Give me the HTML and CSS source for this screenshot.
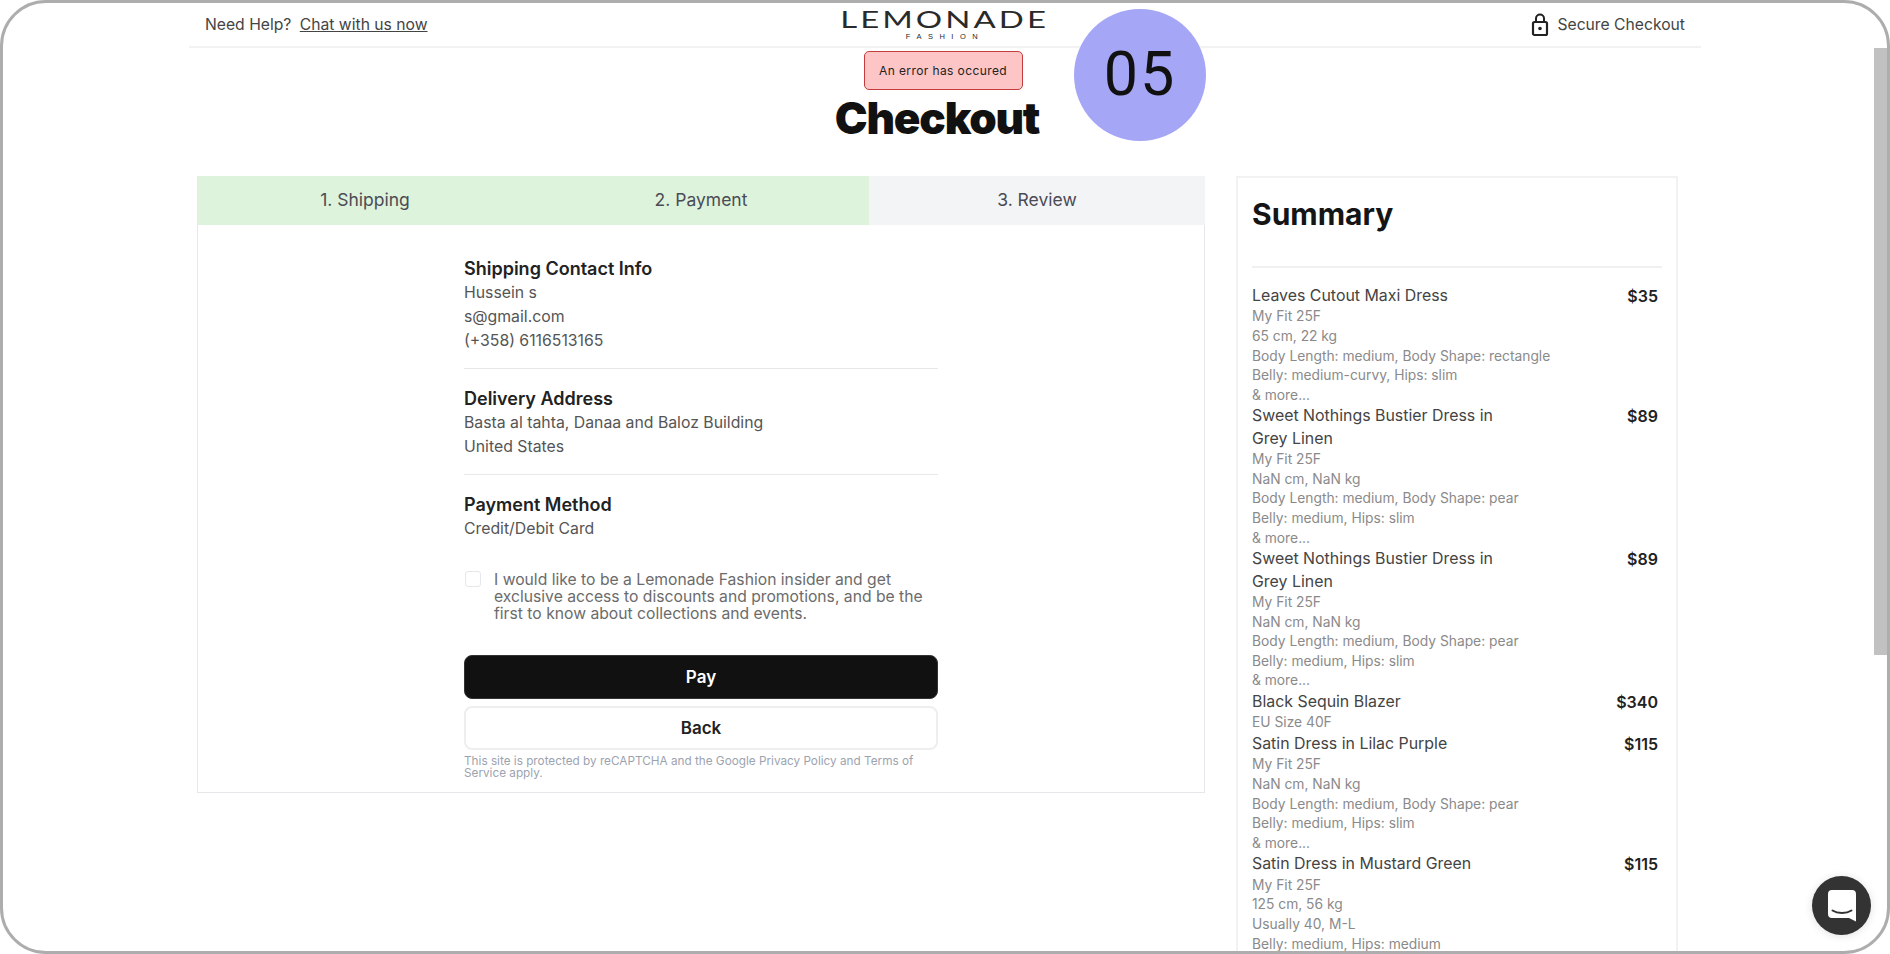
FILE: index.html
```html
<!DOCTYPE html>
<html lang="en">
<head>
<meta charset="utf-8">
<title>Checkout</title>
<link rel="stylesheet" href="styles.css">
</head>
<body>
<div class="frame">
  <div class="page">
    <header class="topbar">
      <div class="help"><span>Need Help?</span> <a class="chat-link" href="#">Chat with us now</a></div>
      <div class="logo">
        <div class="logo-main">LEMONADE</div>
        <div class="logo-sub">FASHION</div>
      </div>
      <div class="secure">
        <svg class="lock" viewBox="0 0 18 26" width="18" height="26" aria-hidden="true">
          <path d="M5 10V6.500a4 4 0 0 1 8 0V10" fill="none" stroke="#222" stroke-width="2"/>
          <rect x="2" y="10" width="14" height="13" rx="1.500" fill="none" stroke="#222" stroke-width="2.200"/>
          <circle cx="9" cy="16.500" r="1.800" fill="#222"/>
        </svg>
        <span>Secure Checkout</span>
      </div>
    </header>
    <div class="heading">
      <div class="error">An error has occured</div>
      <h1 class="title">Checkout</h1>
    </div>
    <div class="columns">
      <section class="card">
        <div class="tabs">
          <div class="tab tab-done">1. Shipping</div>
          <div class="tab tab-done">2. Payment</div>
          <div class="tab tab-todo">3. Review</div>
        </div>
        <div class="review">
          <div class="block">
            <h3 class="block-title">Shipping Contact Info</h3>
            <p class="line">Hussein s</p>
            <p class="line">s@gmail.com</p>
            <p class="line">(+358) 6116513165</p>
          </div>
          <div class="block">
            <h3 class="block-title">Delivery Address</h3>
            <p class="line">Basta al tahta, Danaa and Baloz Building</p>
            <p class="line">United States</p>
          </div>
          <div class="block block-last">
            <h3 class="block-title">Payment Method</h3>
            <p class="line">Credit/Debit Card</p>
          </div>
          <label class="optin">
            <span class="box"></span>
            <span class="optin-text">I would like to be a Lemonade Fashion insider and get exclusive access to discounts and promotions, and be the first to know about collections and events.</span>
          </label>
          <button class="btn btn-pay">Pay</button>
          <button class="btn btn-back">Back</button>
          <p class="legal">This site is protected by reCAPTCHA and the Google Privacy Policy and Terms of Service apply.</p>
        </div>
      </section>
      <aside class="summary">
        <h2 class="summary-title">Summary</h2>
        <div class="items">
          <div class="item">
            <div class="item-head"><span class="item-name">Leaves Cutout Maxi Dress</span><span class="price">$35</span></div>
            <div class="sub">My Fit 25F</div><div class="sub">65 cm, 22 kg</div><div class="sub">Body Length: medium, Body Shape: rectangle</div><div class="sub">Belly: medium-curvy, Hips: slim</div><div class="sub">&amp; more...</div>
          </div>
          <div class="item">
            <div class="item-head"><span class="item-name">Sweet Nothings Bustier Dress in Grey Linen</span><span class="price">$89</span></div>
            <div class="sub">My Fit 25F</div><div class="sub">NaN cm, NaN kg</div><div class="sub">Body Length: medium, Body Shape: pear</div><div class="sub">Belly: medium, Hips: slim</div><div class="sub">&amp; more...</div>
          </div>
          <div class="item">
            <div class="item-head"><span class="item-name">Sweet Nothings Bustier Dress in Grey Linen</span><span class="price">$89</span></div>
            <div class="sub">My Fit 25F</div><div class="sub">NaN cm, NaN kg</div><div class="sub">Body Length: medium, Body Shape: pear</div><div class="sub">Belly: medium, Hips: slim</div><div class="sub">&amp; more...</div>
          </div>
          <div class="item">
            <div class="item-head"><span class="item-name">Black Sequin Blazer</span><span class="price">$340</span></div>
            <div class="sub">EU Size 40F</div>
          </div>
          <div class="item">
            <div class="item-head"><span class="item-name">Satin Dress in Lilac Purple</span><span class="price">$115</span></div>
            <div class="sub">My Fit 25F</div><div class="sub">NaN cm, NaN kg</div><div class="sub">Body Length: medium, Body Shape: pear</div><div class="sub">Belly: medium, Hips: slim</div><div class="sub">&amp; more...</div>
          </div>
          <div class="item">
            <div class="item-head"><span class="item-name">Satin Dress in Mustard Green</span><span class="price">$115</span></div>
            <div class="sub">My Fit 25F</div><div class="sub">125 cm, 56 kg</div><div class="sub">Usually 40, M-L</div><div class="sub">Belly: medium, Hips: medium</div><div class="sub">&amp; more...</div>
          </div>
        </div>
      </aside>
    </div>
  </div>
  <div class="step-badge">05</div>
  <div class="scroll-thumb"></div>
  <div class="chat-bubble">
    <svg viewBox="0 0 28 32" width="28" height="32" aria-hidden="true">
      <path d="M4 0h20a4 4 0 0 1 4 4v27.500l-7-3.500H4a4 4 0 0 1-4-4V4a4 4 0 0 1 4-4z" fill="#fff"/>
      <path d="M4.500 20.500c5 3.200 14 3.200 19 0" fill="none" stroke="#333" stroke-width="2" stroke-linecap="round"/>
    </svg>
  </div>
</div>
</body>
</html>
```
FILE: styles.css
```css
* { box-sizing: border-box; }
html, body { margin: 0; padding: 0; background: #fff; overflow: hidden; }
body { font-family: Inter, "Liberation Sans", sans-serif; color: #111; }
p, h1, h2, h3 { margin: 0; }

.frame {
  position: relative;
  width: 1890px;
  height: 954px;
  border: 3px solid #adadad;
  border-radius: 46px;
  overflow: hidden;
  background: #fff;
}
.page { width: 1512px; margin-left: 186px; }

.topbar {
  display: grid;
  grid-template-columns: 1fr auto 1fr;
  align-items: center;
  height: 45px;
  padding: 0 16px;
  border-bottom: 2px solid #f2f2f2;
  font-size: 15.7px;
  color: #444;
}
.chat-link { color: #444; margin-left: 4px; }
.logo { text-align: center; color: #2a2a2a; height: 43px; }
.logo-main { font-family: Lato, sans-serif; font-size: 23.5px; line-height: 22px; letter-spacing: 2.2px; transform: scaleX(1.4); margin-top: 5px; }
.logo-sub { font-family: "Liberation Sans", sans-serif; font-size: 7.5px; line-height: 10px; letter-spacing: 6.5px; margin-top: 2px; }
.secure { display: flex; align-items: center; justify-content: flex-end; gap: 8px; }

.heading { display: flex; flex-direction: column; align-items: center; }
.error {
  width: 159px;
  height: 39px;
  margin: 3px 0 0 -4px;
  display: flex;
  align-items: center;
  justify-content: center;
  background: #fdc5c5;
  border: 1px solid #c43c3c;
  border-radius: 5px;
  font-size: 12px;
  letter-spacing: 0.4px;
  color: #222;
}
.title {
  margin: 3px 16px 0 0;
  font-size: 44px;
  line-height: 50px;
  font-weight: 900;
  letter-spacing: -1.2px;
  color: #111;
}

.columns { display: flex; gap: 31px; margin-top: 33px; padding-left: 8px; align-items: flex-start; }
.card { width: 1008px; height: 617px; border: 1px solid #e5e7eb; flex: none; }
.tabs { display: grid; grid-template-columns: repeat(3, 1fr); height: 49px; margin: -1px -1px 0; }
.tab { display: flex; align-items: center; justify-content: center; padding-bottom: 2px; font-size: 17.5px; color: #4b4b55; }
.tab-done { background: #def3dc; }
.tab-todo { background: #f3f4f6; }

.review { width: 474px; margin: 0 auto; padding-top: 32px; }
.block { border-bottom: 1px solid #e8e8e8; padding-bottom: 15px; margin-bottom: 18px; }
.block-last { border-bottom: 0; padding-bottom: 0; margin-bottom: 0; }
.block-title { font-size: 18px; line-height: 24px; font-weight: 600; color: #222; }
.line { font-size: 15.8px; line-height: 24px; color: #555; }

.optin { display: flex; gap: 13px; margin-top: 30px; padding-left: 1px; }
.box { width: 16px; height: 16px; flex: none; border: 1.5px solid #e5e7eb; border-radius: 3px; }
.optin-text { font-size: 15.7px; line-height: 17px; color: #6b6b6b; }
.btn {
  display: block;
  width: 100%;
  height: 44px;
  border-radius: 8px;
  font-family: inherit;
  font-size: 17px;
  font-weight: 600;
}
.btn-pay { margin-top: 33px; background: #111; color: #fff; border: 1px solid #333; }
.btn-back { margin-top: 7px; background: #fff; color: #222; border: 2px solid #eeeeee; }
.legal { margin-top: 5px; font-size: 11.75px; line-height: 12px; color: #9ca3af; }

.summary { width: 442px; height: 800px; border: 2px solid #f2f2f2; padding: 0 14px; flex: none; }
.summary-title { font-size: 30px; line-height: 40px; font-weight: 700; padding-top: 16px; height: 90px; border-bottom: 2px solid #f0f0f0; color: #151515; }
.items { padding-top: 17px; padding-right: 4px; }
.item-head { display: flex; justify-content: space-between; gap: 30px; font-size: 15.9px; line-height: 22.4px; color: #444; }
.item-name { width: 270px; }
.price { font-weight: 600; color: #222; font-size: 16px; }
.sub { font-size: 13.8px; line-height: 19.6px; color: #8a8a8a; }

.step-badge {
  position: absolute;
  left: 1071px;
  top: 6px;
  width: 132px;
  height: 132px;
  padding-bottom: 2px;
  border-radius: 50%;
  background: #a5a6f6;
  display: flex;
  align-items: center;
  justify-content: center;
  font-family: Roboto, sans-serif;
  font-size: 61px;
  letter-spacing: 2px;
  color: #111;
}
.scroll-thumb { position: absolute; right: 0; top: 45px; width: 13px; height: 607px; background: #c1c1c1; }
.chat-bubble {
  position: absolute;
  left: 1809px;
  top: 873px;
  width: 59px;
  height: 59px;
  border-radius: 50%;
  background: #333;
  display: flex;
  align-items: center;
  justify-content: center;
  box-shadow: 0 1px 8px rgba(0,0,0,.12);
}
```
